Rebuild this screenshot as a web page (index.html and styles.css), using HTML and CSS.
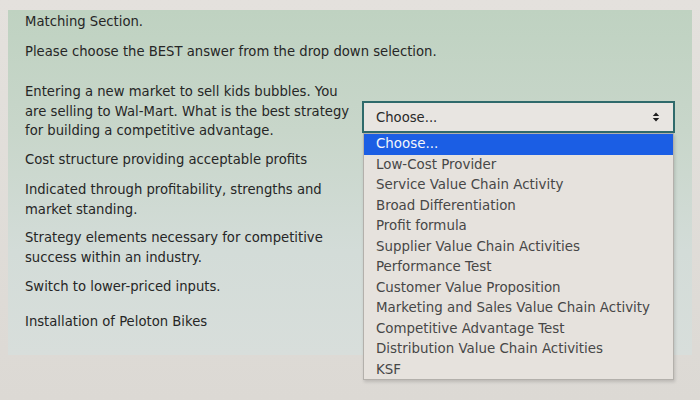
FILE: index.html
```html
<!DOCTYPE html>
<html>
<head>
<meta charset="utf-8">
<link rel="stylesheet" href="styles.css">
</head>
<body>
<div class="screen">
  <div class="panel">
    <p class="intro">Matching Section.</p>
    <p class="intro second">Please choose the BEST answer from the drop down selection.</p>
    <div class="matching">
      <div class="prompts">
        <p class="prompt p1">Entering a new market to sell kids bubbles. You are selling to Wal-Mart. What is the best strategy for building a competitive advantage.</p>
        <p class="prompt p2">Cost structure providing acceptable profits</p>
        <p class="prompt p3">Indicated through profitability, strengths and market standing.</p>
        <p class="prompt p4">Strategy elements necessary for competitive success within an industry.</p>
        <p class="prompt p5">Switch to lower-priced inputs.</p>
        <p class="prompt p6">Installation of Peloton Bikes</p>
      </div>
      <div class="answers">
        <div class="select">
          <span class="select-label">Choose...</span>
          <svg class="arrows" width="8" height="10" viewBox="0 0 8 10"><path d="M4 0.5 L7.2 4 L0.8 4 Z M4 9.5 L0.8 6 L7.2 6 Z" fill="#1e1e1e"/></svg>
          <ul class="options">
            <li class="selected">Choose...</li>
            <li>Low-Cost Provider</li>
            <li>Service Value Chain Activity</li>
            <li>Broad Differentiation</li>
            <li>Profit formula</li>
            <li>Supplier Value Chain Activities</li>
            <li>Performance Test</li>
            <li>Customer Value Proposition</li>
            <li>Marketing and Sales Value Chain Activity</li>
            <li>Competitive Advantage Test</li>
            <li>Distribution Value Chain Activities</li>
            <li>KSF</li>
          </ul>
        </div>
      </div>
    </div>
  </div>
</div>
</body>
</html>
```
FILE: styles.css
```css
html, body {
  margin: 0;
  padding: 0;
}
body {
  width: 700px;
  height: 400px;
  overflow: hidden;
  background: linear-gradient(180deg, #e4e1dd 0%, #dcd9d4 100%);
  font-family: "DejaVu Sans", "Noto Sans", sans-serif;
  font-size: 13.2px;
  color: #262626;
}
.screen {
  padding: 10px 8px 0 8px;
}
.panel {
  width: 684px;
  height: 345px;
  box-sizing: border-box;
  padding: 2px 0 0 17px;
  background: linear-gradient(180deg, #bfd2c1 0%, #c8d6ca 35%, #d3dcd8 70%, #d8dedb 100%);
}
.intro {
  margin: 0;
  line-height: 20px;
}
.intro.second {
  margin-top: 10px;
}
.matching {
  display: flex;
  margin-top: 20px;
}
.prompts {
  width: 337px;
}
.prompt {
  margin: 0;
  line-height: 19.5px;
}
.p1 { width: 332px; }
.p2 { margin-top: 9px; }
.p3 { margin-top: 11px; }
.p4 { margin-top: 9px; }
.p5 { margin-top: 10px; }
.p6 { margin-top: 15px; }
.answers {
  padding-top: 19px;
}
.select {
  position: relative;
  width: 313px;
  height: 32px;
  box-sizing: border-box;
  border: 2px solid #2f6a6b;
  background: #e8e5e1;
  display: flex;
  align-items: center;
  justify-content: space-between;
  padding: 0 13px 0 12px;
  color: #2a2a2a;
}
.arrows {
  display: block;
}
.options {
  position: absolute;
  left: -1px;
  top: 30px;
  width: 311px;
  height: 247px;
  box-sizing: border-box;
  margin: 0;
  padding: 0;
  list-style: none;
  background: #e6e2dd;
  border: 1px solid #b3b0ab;
  box-shadow: 1px 2px 3px rgba(0,0,0,0.15);
  color: #474747;
  font-size: 13.4px;
}
.options li {
  height: 20.5px;
  line-height: 20.5px;
  padding-left: 12px;
  white-space: nowrap;
}
.options li.selected {
  background: #1b5ee4;
  color: #f4f6fb;
}
```
